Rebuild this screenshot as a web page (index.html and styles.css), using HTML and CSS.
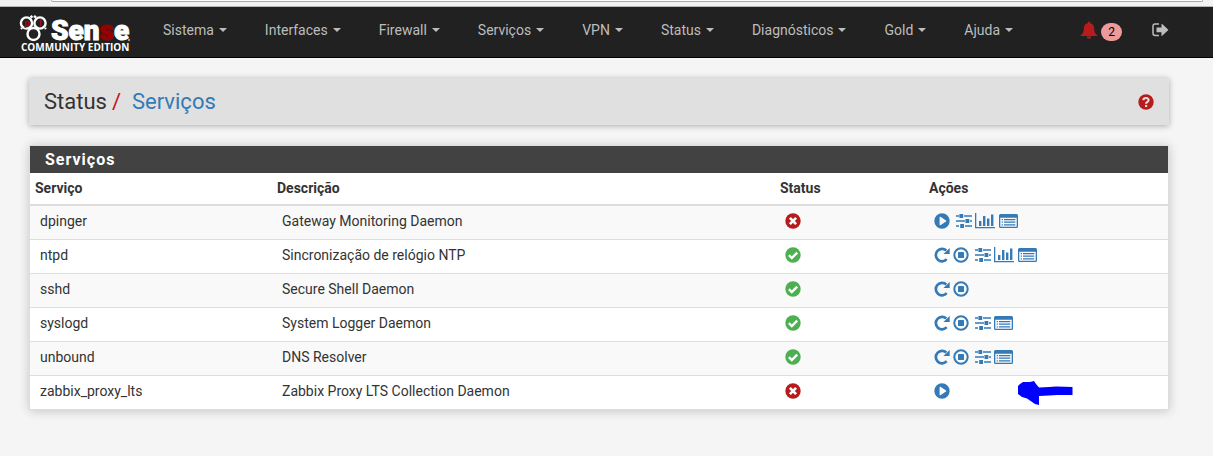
FILE: index.html
```html
<!DOCTYPE html>
<html lang="pt-BR">
<head>
<meta charset="utf-8">
<title>Status: Serviços</title>
<link rel="stylesheet" href="styles.css">
</head>
<body>
<svg class="sprite" aria-hidden="true">
  <symbol id="play" viewBox="0 0 16 16"><path fill-rule="evenodd" d="M8 .3a7.700 7.700 0 1 0 0 15.400A7.700 7.700 0 0 0 8 .3zM5.600 4.200Q5.600 3.400 6.400 3.800L12 7.400Q12.700 8 12 8.600L6.400 12.200Q5.600 12.600 5.600 11.800z"/></symbol>
  <symbol id="redo" viewBox="0 0 16 16"><path d="M12.700 12.200A6.200 6.200 0 1 1 12.300 3.600" fill="none" stroke="currentColor" stroke-width="2.700"/><path d="M15.700.9V7H9.400z"/></symbol>
  <symbol id="stop" viewBox="0 0 16 16"><circle cx="8" cy="8" r="6.700" fill="none" stroke="currentColor" stroke-width="2"/><rect x="5" y="5" width="6" height="6" rx=".4"/></symbol>
  <symbol id="sliders" viewBox="0 0 16 16"><path d="M0 2.200h3v1.500H0zM8 2.200h8v1.500H8zM3.400 1h3.800v4H3.400zM0 7.300h9v1.500H0zM14 7.300h2v1.500h-2zM9.500 6h3.800v4H9.500zM0 12.300h3v1.500H0zM9 12.300h7v1.500H9zM4.200 11H8v4H4.200z"/></symbol>
  <symbol id="chart" viewBox="0 0 21 16"><path d="M0 0h1.300v14H20v1.300H0zM4 8h2.400v5H4zM8 3h2.400v10H8zM12 5.500h2.400V13H12zM16 1.500h2.400V13H16z"/></symbol>
  <symbol id="list" viewBox="0 0 19 16"><path fill-rule="evenodd" d="M1.500 1h16Q19 1 19 2.500v11Q19 15 17.500 15h-16Q0 15 0 13.500v-11Q0 1 1.500 1zM1.300 4.800v8.400q0 .5.5.5h15.400q.5 0 .5-.5V4.800z"/><path d="M2.700 6h1.200v1.200H2.700zM5 6h11.300v1.200H5zM2.700 8.600h1.200v1.200H2.700zM5 8.600h11.300v1.200H5zM2.700 11.200h1.200v1.200H2.700zM5 11.200h11.300v1.200H5z"/></symbol>
  <symbol id="ok" viewBox="0 0 16 16"><circle cx="8" cy="8" r="7.700"/><path d="M3.900 8.100l2.900 2.900 5.400-5.400" fill="none" stroke="#fff" stroke-width="2.400"/></symbol>
  <symbol id="fail" viewBox="0 0 16 16"><circle cx="8" cy="8" r="7.700"/><path d="M4.900 4.900l6.200 6.200M11.100 4.900l-6.200 6.200" fill="none" stroke="#fff" stroke-width="2.700"/></symbol>
  <symbol id="help" viewBox="0 0 16 16"><circle cx="8" cy="8" r="7.700"/><path d="M5.300 6.100C5.600 3.300 10.600 3.300 10.600 6 10.600 7.900 8.100 7.800 8.100 9.800" fill="none" stroke="#e0e0e0" stroke-width="2.100"/><path d="M7 10.900h2.200V13H7z" fill="#e0e0e0"/></symbol>
  <symbol id="bell" viewBox="0 0 18 18"><path d="M8 1Q9 0 10 1v1c2.800.6 4.200 2.800 4.200 5.500 0 3.500 1 5.200 3.300 7V15H.5v-.5c2.300-1.800 3.300-3.500 3.300-7C3.800 4.800 5.200 2.600 8 2zM6.700 15.500h4.600a2.300 2.300 0 0 1-4.600 0z"/></symbol>
  <symbol id="exit" viewBox="0 0 17 14"><path d="M7 1H3.200Q1 1 1 3.200v7.100q0 2.200 2.200 2.200H7" fill="none" stroke="currentColor" stroke-width="1.500"/><path d="M4.500 4.500h5V1.200q0-.9.700-.3l5.900 5.500q.4.400 0 .8l-5.900 5.500q-.7.600-.7-.3V9.200h-5z"/></symbol>
</svg>

<div class="addressbar"><div class="addressbar-field"></div></div>

<header class="navbar">
  <a class="brand" href="#" aria-label="pfSense Community Edition">
    <svg class="brand-logo" viewBox="0 0 112 42" aria-hidden="true">
      <g class="rings">
        <circle cx="7.500" cy="10" r="5.600"/><circle cx="21" cy="10" r="5.600"/><circle cx="14.500" cy="21" r="6"/>
        <path d="M11.500 4.500l2-1.500M17 4.500L15 3M3 15l-1 1M26 15l1 1"/>
      </g>
      <text class="logo-pf" x="5" y="13">p</text>
      <text class="logo-pf" x="19.500" y="13">f</text>
      <text class="logo-sense" x="32" y="27">Sen<tspan class="logo-red">s</tspan>e</text>
      <circle class="logo-mark" cx="110" cy="27" r="1.200"/>
      <text class="logo-edition" x="2" y="38">COMMUNITY EDITION</text>
    </svg>
  </a>
  <nav class="menu">
    <a href="#">Sistema<span class="caret"></span></a>
    <a href="#">Interfaces<span class="caret"></span></a>
    <a href="#">Firewall<span class="caret"></span></a>
    <a href="#">Serviços<span class="caret"></span></a>
    <a href="#">VPN<span class="caret"></span></a>
    <a href="#">Status<span class="caret"></span></a>
    <a href="#">Diagnósticos<span class="caret"></span></a>
    <a href="#">Gold<span class="caret"></span></a>
    <a href="#">Ajuda<span class="caret"></span></a>
  </nav>
  <div class="tools">
    <a class="notices" href="#" aria-label="2 avisos"><svg class="bell"><use href="#bell"/></svg><span class="badge">2</span></a>
    <a class="logout" href="#" aria-label="Sair"><svg class="exit"><use href="#exit"/></svg></a>
  </div>
</header>

<main class="page">
  <div class="titlebar">
    <h1>Status<span class="slash">/</span><a href="#">Serviços</a></h1>
    <a class="help" href="#" aria-label="Ajuda"><svg class="icon"><use href="#help"/></svg></a>
  </div>

  <section class="panel">
    <h2>Serviços</h2>
    <table class="services">
      <colgroup><col class="col-name"><col class="col-desc"><col class="col-status"><col></colgroup>
      <thead><tr><th>Serviço</th><th>Descrição</th><th>Status</th><th>Ações</th></tr></thead>
      <tbody>
        <tr><td>dpinger</td><td>Gateway Monitoring Daemon</td>
          <td><svg class="icon fail" role="img" aria-label="Parado"><use href="#fail"/></svg></td>
          <td><div class="actions"><a href="#" aria-label="Iniciar"><svg class="icon"><use href="#play"/></svg></a><a class="settings" href="#" aria-label="Configurar"><svg class="icon"><use href="#sliders"/></svg></a><a href="#" aria-label="Gráfico"><svg class="icon icon-chart"><use href="#chart"/></svg></a><a href="#" aria-label="Registros"><svg class="icon icon-list"><use href="#list"/></svg></a></div></td></tr>
        <tr><td>ntpd</td><td>Sincronização de relógio NTP</td>
          <td><svg class="icon ok" role="img" aria-label="Em execução"><use href="#ok"/></svg></td>
          <td><div class="actions"><a href="#" aria-label="Reiniciar"><svg class="icon"><use href="#redo"/></svg></a><a href="#" aria-label="Parar"><svg class="icon"><use href="#stop"/></svg></a><a class="settings" href="#" aria-label="Configurar"><svg class="icon"><use href="#sliders"/></svg></a><a href="#" aria-label="Gráfico"><svg class="icon icon-chart"><use href="#chart"/></svg></a><a href="#" aria-label="Registros"><svg class="icon icon-list"><use href="#list"/></svg></a></div></td></tr>
        <tr><td>sshd</td><td>Secure Shell Daemon</td>
          <td><svg class="icon ok" role="img" aria-label="Em execução"><use href="#ok"/></svg></td>
          <td><div class="actions"><a href="#" aria-label="Reiniciar"><svg class="icon"><use href="#redo"/></svg></a><a href="#" aria-label="Parar"><svg class="icon"><use href="#stop"/></svg></a></div></td></tr>
        <tr><td>syslogd</td><td>System Logger Daemon</td>
          <td><svg class="icon ok" role="img" aria-label="Em execução"><use href="#ok"/></svg></td>
          <td><div class="actions"><a href="#" aria-label="Reiniciar"><svg class="icon"><use href="#redo"/></svg></a><a href="#" aria-label="Parar"><svg class="icon"><use href="#stop"/></svg></a><a class="settings" href="#" aria-label="Configurar"><svg class="icon"><use href="#sliders"/></svg></a><a href="#" aria-label="Registros"><svg class="icon icon-list"><use href="#list"/></svg></a></div></td></tr>
        <tr><td>unbound</td><td>DNS Resolver</td>
          <td><svg class="icon ok" role="img" aria-label="Em execução"><use href="#ok"/></svg></td>
          <td><div class="actions"><a href="#" aria-label="Reiniciar"><svg class="icon"><use href="#redo"/></svg></a><a href="#" aria-label="Parar"><svg class="icon"><use href="#stop"/></svg></a><a class="settings" href="#" aria-label="Configurar"><svg class="icon"><use href="#sliders"/></svg></a><a href="#" aria-label="Registros"><svg class="icon icon-list"><use href="#list"/></svg></a></div></td></tr>
        <tr><td>zabbix_proxy_lts</td><td>Zabbix Proxy LTS Collection Daemon</td>
          <td><svg class="icon fail" role="img" aria-label="Parado"><use href="#fail"/></svg></td>
          <td><div class="actions"><a href="#" aria-label="Iniciar"><svg class="icon"><use href="#play"/></svg></a><svg class="pointer" viewBox="0 0 55 25" aria-hidden="true"><path d="M0 5L2 3 5 1 12 1 16 0 18 3 21 6.500 31 6 38 5.500 54.500 6V14H39L31 14.500 21 15V24L17 23 9 17.500 4 16 0 13z"/></svg></div></td></tr>
      </tbody>
    </table>
  </section>
</main>
</body>
</html>
```
FILE: styles.css
```css
* { box-sizing: border-box; }
body {
  margin: 0;
  background: #f5f5f5;
  color: #333;
  font: 14px/20px Roboto, "Liberation Sans", sans-serif;
}
a { color: #337ab7; text-decoration: none; }
svg { display: block; fill: currentColor; }
.sprite { position: absolute; width: 0; height: 0; }

.addressbar {
  height: 7px;
  padding: 0 10px 0 51px;
  background: #f2f2f2;
  border-bottom: 1px solid #b4b7b5;
}
.addressbar-field {
  height: 2px;
  background: #fff;
  border: solid #a5a9a8;
  border-width: 0 1px 1px;
  border-radius: 0 0 2px 2px;
}

.navbar {
  display: flex;
  align-items: center;
  height: 51px;
  padding: 0 44px 4px 19px;
  background: #212121;
  border-bottom: 1px solid #000;
}
.brand { padding-top: 8px; }
.brand-logo { width: 112px; height: 42px; }
.rings { fill: none; stroke: #fff; stroke-width: 2.4; }
.logo-pf { font: bold 9px "Liberation Sans", sans-serif; fill: #b00; }
.logo-sense {
  font: 900 28px Roboto, "Liberation Sans", sans-serif;
  fill: #fff;
  stroke: #fff;
  stroke-width: 1;
}
.logo-red { fill: #900; stroke: #900; }
.logo-mark { fill: #999; }
.logo-edition {
  font: bold 10px "Open Sans", "Noto Sans", sans-serif;
  fill: #fff;
}
.menu { display: flex; gap: 38px; padding-left: 32px; }
.menu a { display: flex; align-items: center; gap: 5px; color: #bdbdbd; }
.caret { border: 4px solid transparent; border-top-color: currentColor; border-bottom: 0; }
.tools { display: flex; align-items: center; gap: 30px; margin-left: auto; }
.notices { display: flex; align-items: center; gap: 3px; color: #b71c1c; }
.bell { width: 18px; height: 18px; }
.badge {
  padding: 3px 7px;
  margin-top: 3px;
  border-radius: 9px;
  background: #ef9a9a;
  color: #000;
  font-size: 12px;
  line-height: 12px;
}
.logout { color: #bdbdbd; }
.exit { width: 17px; height: 14px; }

.page { padding: 20px 44px 40px 29px; }
.titlebar {
  display: flex;
  align-items: center;
  justify-content: space-between;
  padding: 9px 15px 8px;
  margin-bottom: 20px;
  background: #e0e0e0;
  box-shadow: 0 1px 6px rgba(0, 0, 0, .3);
}
h1 { margin: 0; font-size: 22px; font-weight: 400; line-height: 30px; }
.slash { margin: 0 11px 0 5px; color: #c9101a; }
.help { color: #b71c1c; }

.panel {
  background: #fff;
  border: 1px solid #ddd;
  box-shadow: 0 1px 10px rgba(0, 0, 0, .2);
}
h2 {
  margin: 0;
  padding: 4px 15px 3px;
  background: #424242;
  color: #fff;
  font-size: 16px;
  font-weight: 700;
  letter-spacing: 1px;
  line-height: 20px;
}
.services { width: 100%; border-collapse: separate; border-spacing: 0; table-layout: fixed; }
.col-name { width: 242px; }
.col-desc { width: 503px; }
.col-status { width: 149px; }
th {
  padding: 5px 5px 6px;
  border-bottom: 2px solid #ddd;
  font-weight: 700;
  line-height: 20px;
  text-align: left;
}
td { height: 34px; padding: 0 10px 3px; border-bottom: 1px solid #ddd; }
tbody tr:last-child td { height: 33px; border-bottom: 0; }
tbody tr:nth-child(odd) { background: #f9f9f9; }
.icon { width: 16px; height: 16px; }
.icon-chart { width: 21px; }
.icon-list { width: 19px; }
.ok { color: #4caf50; }
.fail { color: #b71c1c; }
.actions { position: relative; display: flex; align-items: center; gap: 3px; }
.settings { margin-left: 3px; }
/* Hand-drawn arrow lying over the row */
.pointer { position: absolute; left: 84px; top: -2px; width: 55px; height: 25px; fill: #00f; }
```
